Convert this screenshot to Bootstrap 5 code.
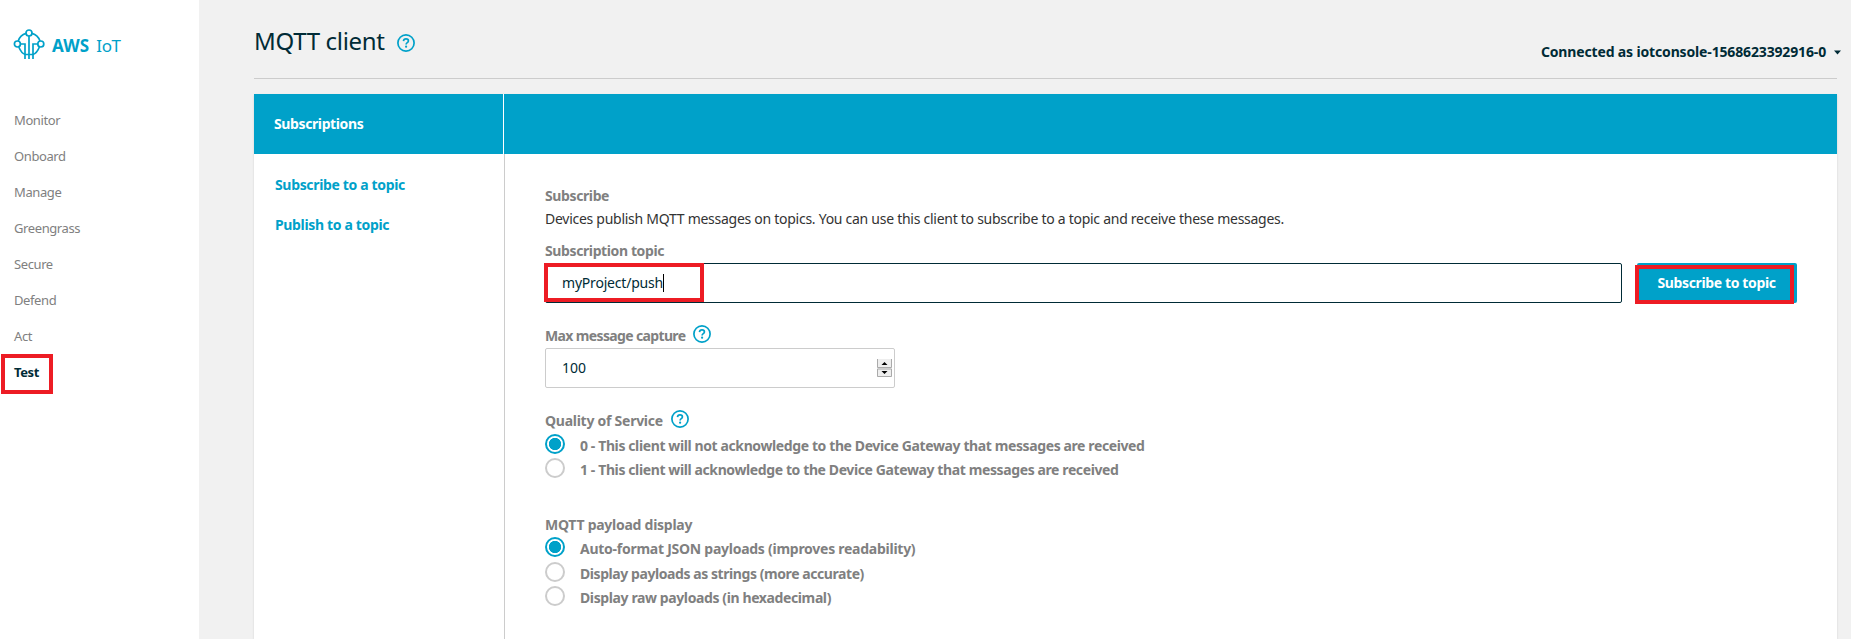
<!DOCTYPE html>
<html lang="en">
<head>
<meta charset="utf-8">
<meta name="viewport" content="width=device-width, initial-scale=1">
<title>AWS IoT - MQTT client</title>
<link href="https://cdn.jsdelivr.net/npm/bootstrap@5.3.0/dist/css/bootstrap.min.css" rel="stylesheet">
<style>
  :root { --aws-blue: #00a1c9; --ink: #002b36; --muted: #808080; --line: #ccc; --mark: #ed1c24; }
  body { font: 14px/20px "Noto Sans", "Open Sans", sans-serif; background: #f1f1f1; color: #333; letter-spacing: -.27px; }
  b, label, .fw-bold { letter-spacing: -.39px; }
  .ls-a { letter-spacing: -.26px !important; }
  .ls-b { letter-spacing: -.15px !important; }
  .ls-c { letter-spacing: -.64px !important; }
  .blue { color: var(--aws-blue); }
  .muted { color: var(--muted); }
  .sidebar { width: 199px; padding-top: 28px; }
  .brand { height: 32px; padding-left: 13px; color: var(--aws-blue); font-size: 17px; }
  .brand b { letter-spacing: .15px; margin: 4px 7px 0 7px; }
  .brand .iot { margin-top: 4px; letter-spacing: -.4px; }
  .side-nav { margin-top: 42px; }
  .side-nav .nav-link { height: 36px; padding: 8px 14px; color: var(--muted); font-size: 13px; letter-spacing: -.4px; }
  .side-nav .active { color: var(--ink); font-weight: 700; }
  .marked { position: relative; }
  .marked::after { content: ""; position: absolute; border: 4px solid var(--mark); pointer-events: none; }
  .marked-nav::after { left: 1px; top: 0; width: 52px; height: 40px; }
  .marked-input::after { left: -2px; top: -1px; width: 160px; height: 39px; }
  .marked-btn::after { left: -2px; top: 2px; width: 159px; height: 39px; }
  .main { padding-left: 55px; }
  .page-head { height: 79px; margin-right: 14px; border-bottom: 1px solid var(--line); padding-top: 21px; }
  .page-head h1 { font-size: 24px; line-height: 40px; letter-spacing: -.32px; font-weight: 400; color: var(--ink); margin: 0; }
  .page-head .help { margin: 13px 0 0 12px; }
  .connected { color: var(--ink); margin: 21px -4px 0 0; }
  .connected svg { margin: 0 0 0 8px; }
  .panel { margin: 15px 14px 0 0; background: #fff; box-shadow: 0 1px 2px rgba(0,0,0,.12); }
  .panel-head { height: 60px; background: var(--aws-blue); color: #fff; }
  .panel-head b { width: 250px; border-right: 1px solid #fff; padding: 20px 0 0 20px; }
  .topics { width: 251px; border-right: 1px solid var(--line); padding: 21px 0 0 21px; }
  .topics a { margin-bottom: 20px; text-decoration: none; letter-spacing: -.34px; }
  .form-area { padding: 32px 40px 0; }
  .intro { margin-top: 3px; }
  .topic-label { margin: 12px 0 2px; }
  .field-label { margin: 23px 0 2px; }
  .group-label { margin: 23px 0 3px; }
  .payload-label { margin: 33px 0 2px; }
  .help { width: 18px; height: 18px; }
  .form-area .help { margin: -1px 0 0 8px; }
  .field { height: 40px; border: 1px solid var(--line); border-radius: 2px; padding: 0 16px; color: var(--ink); background: #fff; }
  .topic-field { border-color: var(--ink); width: 1077px; letter-spacing: -.2px; }
  .caret-line { width: 1px; height: 18px; background: #000; }
  .subscribe-btn { width: 160px; height: 40px; margin-left: 15px; padding: 0 1px 0 0; border: 0; border-radius: 2px; background: var(--aws-blue); color: #fff; font-size: 14px; line-height: 20px; letter-spacing: -.37px; }
  .number-field { width: 350px; padding-right: 2px; letter-spacing: 0; }
  .choice { height: 24px; }
  .choice label { margin: 2px 0 0 15px; }
  .choice .form-check-input { width: 20px; height: 20px; margin: 0; border: 2px solid var(--line); background: #fff; box-shadow: none; }
  .choice .form-check-input:checked { border-color: var(--aws-blue); background: radial-gradient(circle, var(--aws-blue) 5.8px, #fff 6.5px); }
</style>
</head>
<body>
<svg class="d-none">
  <symbol id="help" viewBox="0 0 18 18">
    <circle cx="9" cy="9" r="8.1" fill="none" stroke="#00a1c9" stroke-width="1.7"/>
    <path d="M6.500 7.100C6.600 5.600 7.600 4.900 9 4.900c1.400 0 2.400.8 2.400 2 0 1.800-2.300 1.600-2.300 3.500" fill="none" stroke="#00a1c9" stroke-width="1.7"/>
    <circle cx="9.1" cy="12.700" r="1.100" fill="#00a1c9"/>
  </symbol>
</svg>
<div class="d-flex vh-100 overflow-hidden">
  <aside class="sidebar bg-white flex-shrink-0">
    <div class="brand d-flex align-items-center">
      <svg width="32" height="32" viewBox="0 0 32 32" fill="none" stroke="#00a1c9" stroke-width="1.7">
        <circle cx="16" cy="5" r="3"/><circle cx="4.4" cy="16" r="3"/><circle cx="27.8" cy="16" r="3"/>
        <path d="M13 5.400A12 12 0 0 0 5.200 13M19 5.400A12 12 0 0 1 27 13M5.800 19c1.700 4.300 4 6.800 6.600 7.500h7.400c2.800-.8 5-3.300 6.600-7.500"/>
        <path d="M16 8v23M7.500 16H12v15M24.700 16H20v15"/>
      </svg>
      <b>AWS</b><span class="iot">IoT</span>
    </div>
    <nav class="side-nav nav flex-column">
      <a class="nav-link" href="#">Monitor</a>
      <a class="nav-link" href="#">Onboard</a>
      <a class="nav-link" href="#">Manage</a>
      <a class="nav-link" href="#">Greengrass</a>
      <a class="nav-link" href="#">Secure</a>
      <a class="nav-link" href="#">Defend</a>
      <a class="nav-link" href="#">Act</a>
      <a class="nav-link active marked marked-nav" href="#">Test</a>
    </nav>
  </aside>
  <main class="main flex-grow-1 d-flex flex-column">
    <header class="page-head d-flex flex-shrink-0">
      <h1>MQTT client</h1>
      <svg class="help"><use href="#help"/></svg>
      <div class="connected ms-auto"><b class="ls-b">Connected as iotconsole-1568623392916-0</b><svg width="7" height="13" viewBox="0 0 7 13"><path d="M0 3.500h7L3.500 7.500z" fill="#002b36"/></svg></div>
    </header>
    <section class="panel flex-grow-1 d-flex flex-column">
      <div class="panel-head flex-shrink-0 d-flex"><b>Subscriptions</b></div>
      <div class="d-flex flex-grow-1">
        <div class="topics d-flex flex-column fw-bold">
          <a class="blue" href="#">Subscribe to a topic</a>
          <a class="blue" href="#">Publish to a topic</a>
        </div>
        <form class="form-area flex-grow-1">
          <div class="muted fw-bold">Subscribe</div>
          <div class="intro">Devices publish MQTT messages on topics. You can use this client to subscribe to a topic and receive these messages.</div>
          <div class="topic-label muted fw-bold">Subscription topic</div>
          <div class="d-flex">
            <div class="field topic-field d-flex align-items-center marked marked-input"><span>myProject/push</span><span class="caret-line"></span></div>
            <button type="button" class="btn fw-bold subscribe-btn marked marked-btn">Subscribe to topic</button>
          </div>
          <div class="field-label d-flex muted fw-bold"><span class="ls-c">Max message capture</span><svg class="help"><use href="#help"/></svg></div>
          <div class="field number-field d-flex align-items-center justify-content-between">
            <span>100</span>
            <svg width="15" height="18" viewBox="0 0 15 18"><path d="M0 0h15v18H0z" fill="#eee"/><path d="M.5 0v8.500h14V0M.5 10v7.500h14V10z" fill="none" stroke="#aaa"/><path d="M4.500 6l3-3 3 3zM4.500 12h6l-3 3z" fill="#000"/></svg>
          </div>
          <div class="group-label d-flex muted fw-bold"><span class="ls-a">Quality of Service</span><svg class="help"><use href="#help"/></svg></div>
          <div class="choice d-flex muted fw-bold"><input class="form-check-input" type="radio" name="qos" id="q0" checked><label for="q0">0 - This client will not acknowledge to the Device Gateway that messages are received</label></div>
          <div class="choice d-flex muted fw-bold"><input class="form-check-input" type="radio" name="qos" id="q1"><label for="q1">1 - This client will acknowledge to the Device Gateway that messages are received</label></div>
          <div class="payload-label muted fw-bold ls-a">MQTT payload display</div>
          <div class="choice d-flex muted fw-bold"><input class="form-check-input" type="radio" name="fmt" id="f0" checked><label class="ls-a" for="f0">Auto-format JSON payloads (improves readability)</label></div>
          <div class="choice d-flex muted fw-bold" style="margin-top:1px"><input class="form-check-input" type="radio" name="fmt" id="f1"><label for="f1" style="letter-spacing:-.43px">Display payloads as strings (more accurate)</label></div>
          <div class="choice d-flex muted fw-bold"><input class="form-check-input" type="radio" name="fmt" id="f2"><label for="f2">Display raw payloads (in hexadecimal)</label></div>
        </form>
      </div>
    </section>
  </main>
</div>
<script src="https://cdn.jsdelivr.net/npm/bootstrap@5.3.0/dist/js/bootstrap.bundle.min.js"></script>
</body>
</html>
